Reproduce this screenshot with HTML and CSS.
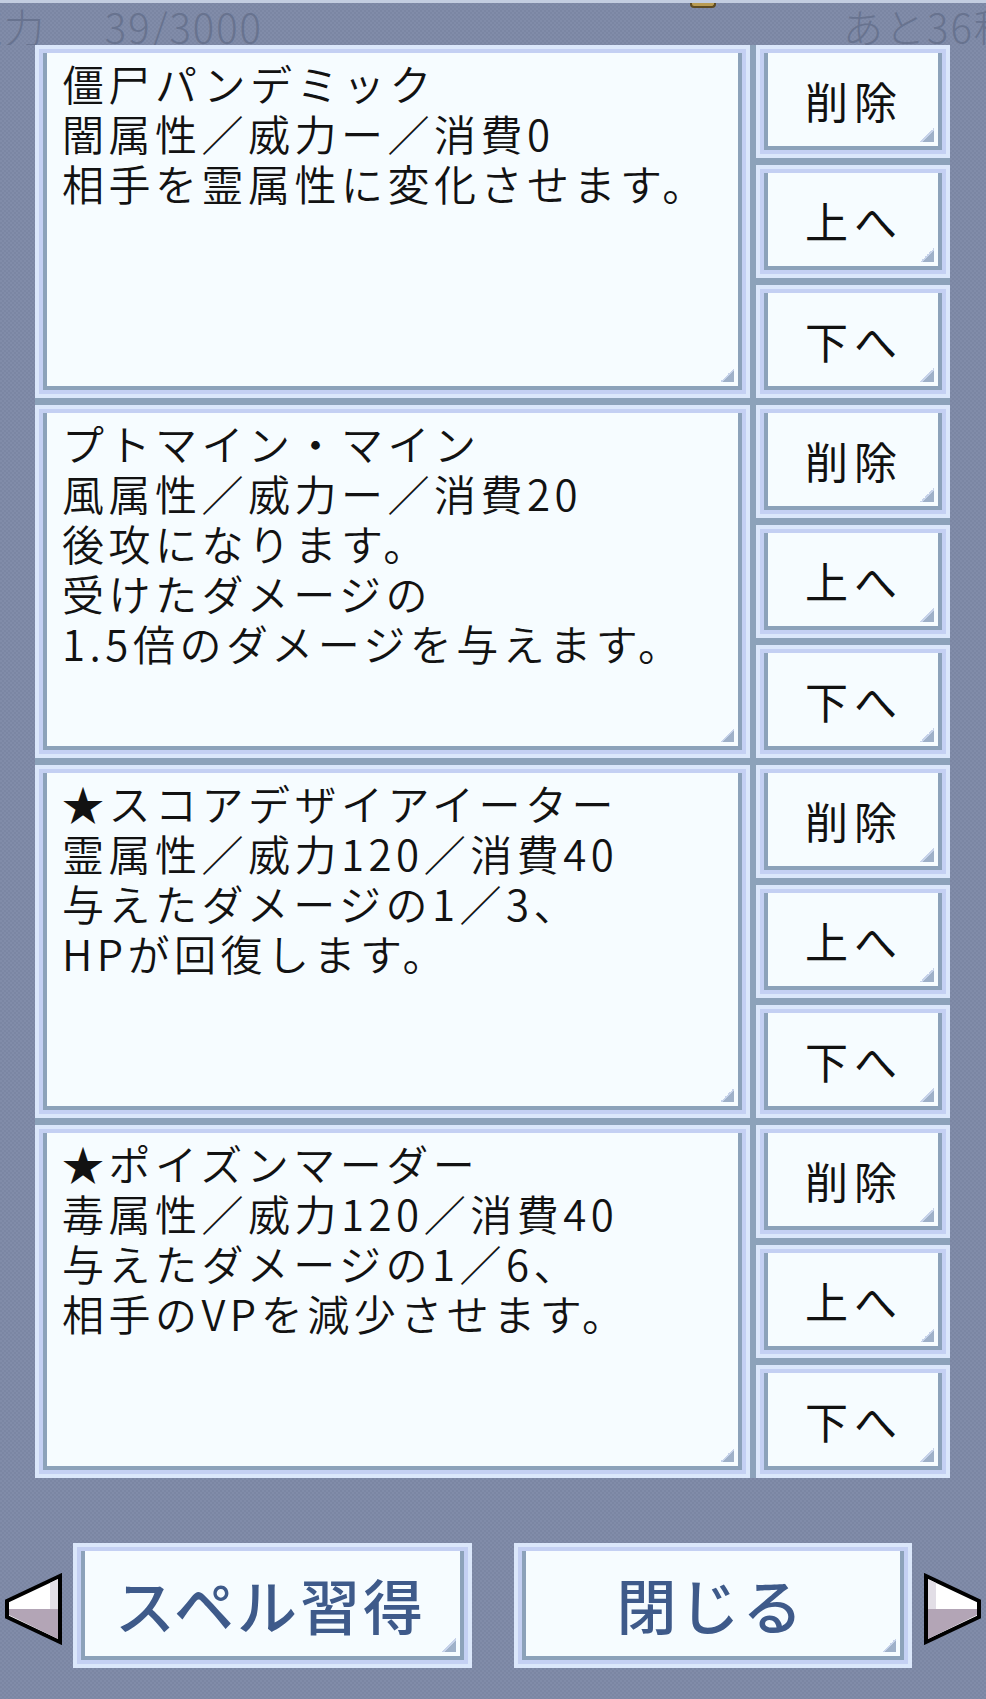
FILE: index.html
```html
<!DOCTYPE html>
<html lang="ja">
<head>
<meta charset="utf-8">
<title>スペル</title>
<link rel="stylesheet" href="styles.css">
</head>
<body>
<div class="screen">
  <header class="hud">
    <span class="gem"></span>
    <div class="hud-row">
      <span class="hud-left">魔力 39/3000</span>
      <span class="hud-right">あと36秒</span>
    </div>
  </header>

  <main class="panel">
    <section class="group">
      <div class="frame card"><div class="inner"><p class="desc">僵尸パンデミック<br>闇属性／威力ー／消費0<br>相手を霊属性に変化させます。</p></div></div>
      <div class="btns">
        <button class="frame btn"><span class="inner">削除</span></button>
        <button class="frame btn"><span class="inner">上へ</span></button>
        <button class="frame btn"><span class="inner">下へ</span></button>
      </div>
    </section>
    <section class="group">
      <div class="frame card"><div class="inner"><p class="desc">プトマイン・マイン<br>風属性／威力ー／消費20<br>後攻になります。<br>受けたダメージの<br>1.5倍のダメージを与えます。</p></div></div>
      <div class="btns">
        <button class="frame btn"><span class="inner">削除</span></button>
        <button class="frame btn"><span class="inner">上へ</span></button>
        <button class="frame btn"><span class="inner">下へ</span></button>
      </div>
    </section>
    <section class="group">
      <div class="frame card"><div class="inner"><p class="desc">★スコアデザイアイーター<br>霊属性／威力120／消費40<br>与えたダメージの1／3、<br>HPが回復します。</p></div></div>
      <div class="btns">
        <button class="frame btn"><span class="inner">削除</span></button>
        <button class="frame btn"><span class="inner">上へ</span></button>
        <button class="frame btn"><span class="inner">下へ</span></button>
      </div>
    </section>
    <section class="group">
      <div class="frame card"><div class="inner"><p class="desc">★ポイズンマーダー<br>毒属性／威力120／消費40<br>与えたダメージの1／6、<br>相手のVPを減少させます。</p></div></div>
      <div class="btns">
        <button class="frame btn"><span class="inner">削除</span></button>
        <button class="frame btn"><span class="inner">上へ</span></button>
        <button class="frame btn"><span class="inner">下へ</span></button>
      </div>
    </section>
  </main>

  <footer class="footer">
    <svg class="arrow" width="58" height="72" viewBox="0 0 58 72" aria-hidden="true">
      <polygon points="56,3 56,69 3,44 3,28" fill="#ffffff" stroke="#000" stroke-width="4" stroke-linejoin="miter"/>
      <polygon points="54,36 54,66 5,42 5,36" fill="#b3a5b6"/>
      <polygon points="54,6 54,36 46,36 46,10" fill="#e2dee6"/>
    </svg>
    <button class="frame big"><span class="inner">スペル習得</span></button>
    <button class="frame big big2"><span class="inner">閉じる</span></button>
    <svg class="arrow right" width="58" height="72" viewBox="0 0 58 72" aria-hidden="true">
      <polygon points="56,3 56,69 3,44 3,28" fill="#ffffff" stroke="#000" stroke-width="4" stroke-linejoin="miter"/>
      <polygon points="54,36 54,66 5,42 5,36" fill="#b3a5b6"/>
      <polygon points="54,6 54,36 46,36 46,10" fill="#e2dee6"/>
    </svg>
  </footer>
</div>
</body>
</html>
```

FILE: styles.css
```css
* { box-sizing: border-box; }

html, body {
  margin: 0;
  padding: 0;
}

body {
  width: 986px;
  height: 1699px;
  overflow: hidden;
  background-color: #7e89a6;
  background-image: repeating-conic-gradient(#7b86a3 0 25%, #818ca9 0 50%);
  background-size: 4px 4px;
  font-family: "Noto Sans CJK JP", "Noto Sans", sans-serif;
}

.screen {
  width: 986px;
  height: 1699px;
  display: flex;
  flex-direction: column;
}

/* faded hud at the top */
.hud {
  position: relative;
  height: 45px;
  flex: none;
  overflow: hidden;
  border-top: 3px solid #c3cde0;
}

.gem {
  position: absolute;
  left: 690px;
  top: -3px;
  width: 26px;
  height: 8px;
  background: #b99b52;
  border: 2px solid #5d4a22;
  border-top: 0;
  border-radius: 0 0 4px 4px;
}

.hud-row {
  display: flex;
  margin-left: -38px;
  margin-top: 1px;
  font-size: 40px;
  line-height: 45px;
  font-weight: 300;
  color: #68738f;
  white-space: nowrap;
}

.hud-left { flex: none; width: 881px; letter-spacing: 2px; word-spacing: 48px; }
.hud-right { flex: none; letter-spacing: 2px; }

/* frames */
.frame {
  display: block;
  border: 4px solid #dbe7fb;
  padding: 4px;
  background: #c4d0f3;
  margin: 0;
  font: inherit;
  appearance: none;
  -webkit-appearance: none;
  border-radius: 0;
}

.frame > .inner {
  position: relative;
  display: block;
  height: 100%;
  background: #f6fcff;
  border: 4px solid #8ca2ba;
  border-top: 0;
}

.frame > .inner::after {
  content: "";
  position: absolute;
  right: 4px;
  bottom: 4px;
  width: 14px;
  height: 14px;
  background: linear-gradient(135deg, transparent 50%, #c7d3ea 50%, #c7d3ea 58%, #9fb1c9 58%);
}

/* list panel */
.panel {
  flex: none;
  width: 915px;
  margin-left: 35px;
  background: #8ca2ba;
  display: flex;
  flex-direction: column;
  gap: 7px;
}

.group {
  display: flex;
  gap: 6px;
  height: 353px;
}

.card {
  width: 715px;
  height: 353px;
  flex: none;
}

.desc {
  margin: 0;
  padding: 5px 0 0 15px;
  font-size: 42px;
  font-weight: 350;
  line-height: 50px;
  letter-spacing: 4.5px;
  color: #121212;
  white-space: nowrap;
}

.btns {
  display: flex;
  flex-direction: column;
  gap: 7px;
  width: 194px;
  flex: none;
}

.btn {
  height: 113px;
  width: 194px;
  cursor: pointer;
}

.btn > .inner {
  display: flex;
  align-items: center;
  justify-content: center;
  font-size: 43px;
  letter-spacing: 6px;
  padding-left: 2px;
  color: #111;
  font-weight: 400;
}

/* footer */
.footer {
  flex: none;
  display: flex;
  align-items: flex-start;
  padding: 65px 0 0 4px;
  height: 221px;
}

.arrow {
  flex: none;
  margin-top: 30px;
}

.arrow.right {
  transform: scaleX(-1);
  margin-left: 12px;
}

.big {
  width: 399px;
  height: 125px;
  margin-left: 11px;
  cursor: pointer;
}

.big2 {
  width: 398px;
  margin-left: 42px;
}

.big > .inner {
  display: flex;
  align-items: center;
  justify-content: center;
  font-size: 60px;
  font-weight: 500;
  letter-spacing: 3px;
  padding-right: 4px;
  color: #3e5a8a;
}
```
